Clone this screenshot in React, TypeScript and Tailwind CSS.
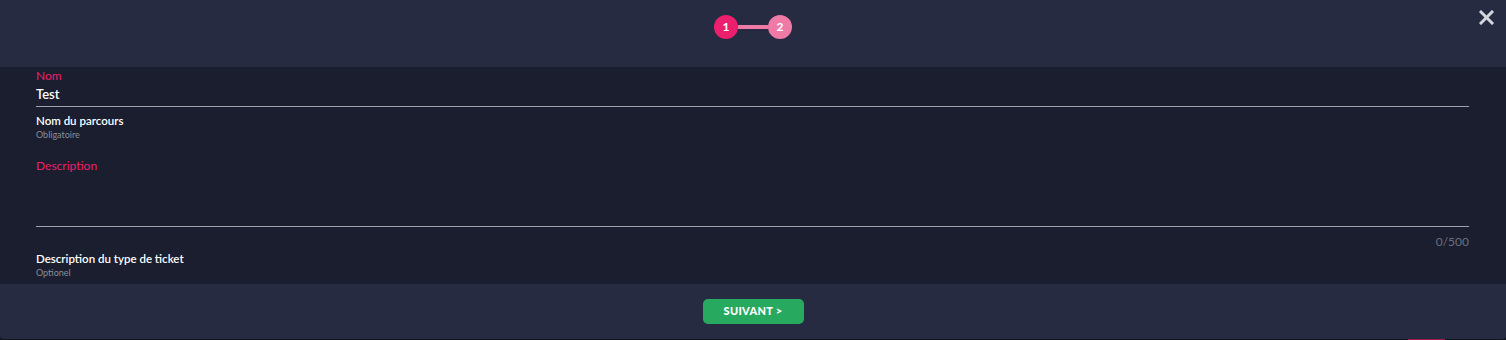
import React from "react";

const font = { fontFamily: "Lato, 'Noto Sans', sans-serif" };

function Stepper() {
  return (
    <div className="flex items-center">
      <div className="w-6 h-6 rounded-full bg-[#ec1f6c] text-white text-[12px] font-bold flex items-center justify-center">1</div>
      <div className="w-[30px] h-[4px] bg-[#f07aa6]" />
      <div className="w-6 h-6 rounded-full bg-[#f07aa6] text-white text-[12px] font-bold flex items-center justify-center">2</div>
    </div>
  );
}

export default function App() {
  return (
    <div className="w-[1506px] h-[340px] bg-[#12141c] flex flex-col" style={font}>
      <div className="h-[67px] bg-[#262b42] relative flex items-start justify-center pt-[15px]">
        <Stepper />
        <button className="absolute right-[10px] top-[7px] w-5 h-5 flex items-center justify-center">
          <svg width="15" height="15" viewBox="0 0 15 15">
            <path d="M2 2 L13 13 M13 2 L2 13" stroke="#d4d6de" strokeWidth="3" strokeLinecap="square" />
          </svg>
        </button>
      </div>

      <div className="h-[217px] bg-[#1a1e2e] pl-[36px] pr-[37px] flex flex-col">
        <span className="text-[12px] leading-[15px] text-[#ec1f6c] mt-[1px]">Nom</span>
        <span className="text-[13px] leading-[16px] text-white font-semibold mt-[3px]">Test</span>
        <div className="h-px bg-[#a0a2ab] mt-[4px]" />
        <span className="text-[11.5px] leading-[14px] text-white font-semibold mt-[7px]">Nom du parcours</span>
        <span className="text-[9px] leading-[12px] text-[#8a8d99] mt-[1px]">Obligatoire</span>

        <span className="text-[12px] leading-[15px] text-[#ec1f6c] mt-[17px]">Description</span>
        <div className="h-px bg-[#a0a2ab] mt-[53px]" />
        <span className="self-end text-[12px] leading-[15px] text-[#6b6f7d] mt-[7px]">0/500</span>
        <span className="text-[11.5px] leading-[14px] text-white font-semibold mt-[3px]">Description du type de ticket</span>
        <span className="text-[9px] leading-[12px] text-[#8a8d99] mt-[1px]">Optionel</span>
      </div>

      <div className="h-[55px] bg-[#262b42] rounded-b-[3px] flex items-start justify-center pt-[15px]">
        <button className="w-[101px] h-[25px] rounded-[5px] bg-[#27a95f] text-white text-[11px] font-black tracking-[0.3px]">
          SUIVANT &gt;
        </button>
      </div>
      <div className="h-px flex justify-end pr-[61px]">
        <div className="w-[37px] h-px bg-[#a01848]" />
      </div>
    </div>
  );
}
